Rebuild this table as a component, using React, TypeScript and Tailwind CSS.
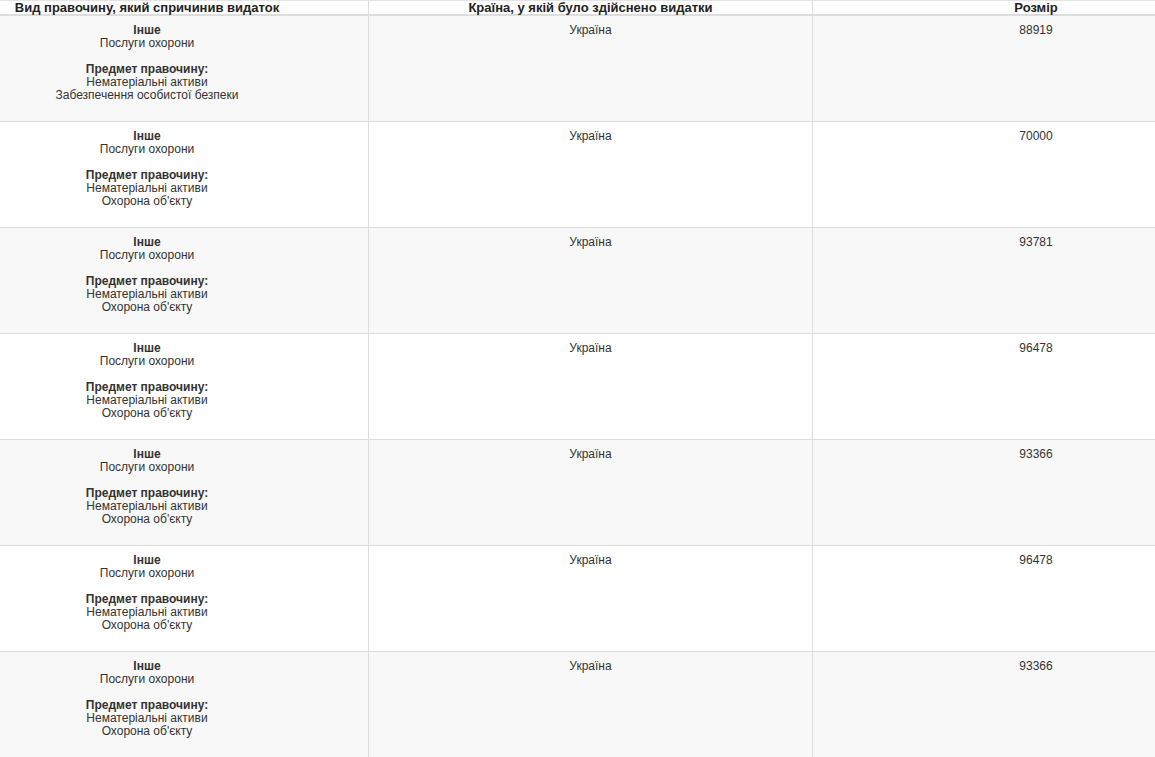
import React from "react";

const rows = [
  { subject: "Забезпечення особистої безпеки", amount: "88919" },
  { subject: "Охорона об'єкту", amount: "70000" },
  { subject: "Охорона об'єкту", amount: "93781" },
  { subject: "Охорона об'єкту", amount: "96478" },
  { subject: "Охорона об'єкту", amount: "93366" },
  { subject: "Охорона об'єкту", amount: "96478" },
  { subject: "Охорона об'єкту", amount: "93366" },
];

export default function App() {
  return (
    <div
      className="w-[1155px] h-[757px] overflow-hidden bg-white text-[#333]"
      style={{ fontFamily: '"Liberation Sans", Arial, sans-serif' }}
    >
      <div className="grid grid-cols-[369px_444px_446px] w-[1259px] border-t border-[#e4e4e4]">
        <div className="h-[15px] border-r border-b-2 border-[#dddddd] pr-[74px] text-center text-[13px] leading-[14px] font-bold text-[#222]">
          Вид правочину, який спричинив видаток
        </div>
        <div className="h-[15px] border-r border-b-2 border-[#dddddd] text-center text-[13px] leading-[14px] font-bold text-[#222]">
          Країна, у якій було здійснено видатки
        </div>
        <div className="h-[15px] border-b-2 border-[#dddddd] text-center text-[13px] leading-[14px] font-bold text-[#222]">
          Розмір
        </div>
        {rows.map((r, i) => {
          const bg = i % 2 === 0 ? "bg-[#f8f8f8]" : "bg-white";
          return (
            <React.Fragment key={i}>
              <div className={`h-[106px] border-r border-b border-[#dddddd] pr-[74px] pt-[8px] text-center text-[12px] leading-[13px] ${bg}`}>
                <div className="font-bold">Інше</div>
                <div>Послуги охорони</div>
                <div className="h-[13px]" />
                <div className="font-bold">Предмет правочину:</div>
                <div>Нематеріальні активи</div>
                <div>{r.subject}</div>
              </div>
              <div className={`h-[106px] border-r border-b border-[#dddddd] pt-[8px] text-center text-[12px] leading-[13px] ${bg}`}>
                Україна
              </div>
              <div className={`h-[106px] border-b border-[#dddddd] pt-[8px] text-center text-[12px] leading-[13px] ${bg}`}>
                {r.amount}
              </div>
            </React.Fragment>
          );
        })}
      </div>
    </div>
  );
}
